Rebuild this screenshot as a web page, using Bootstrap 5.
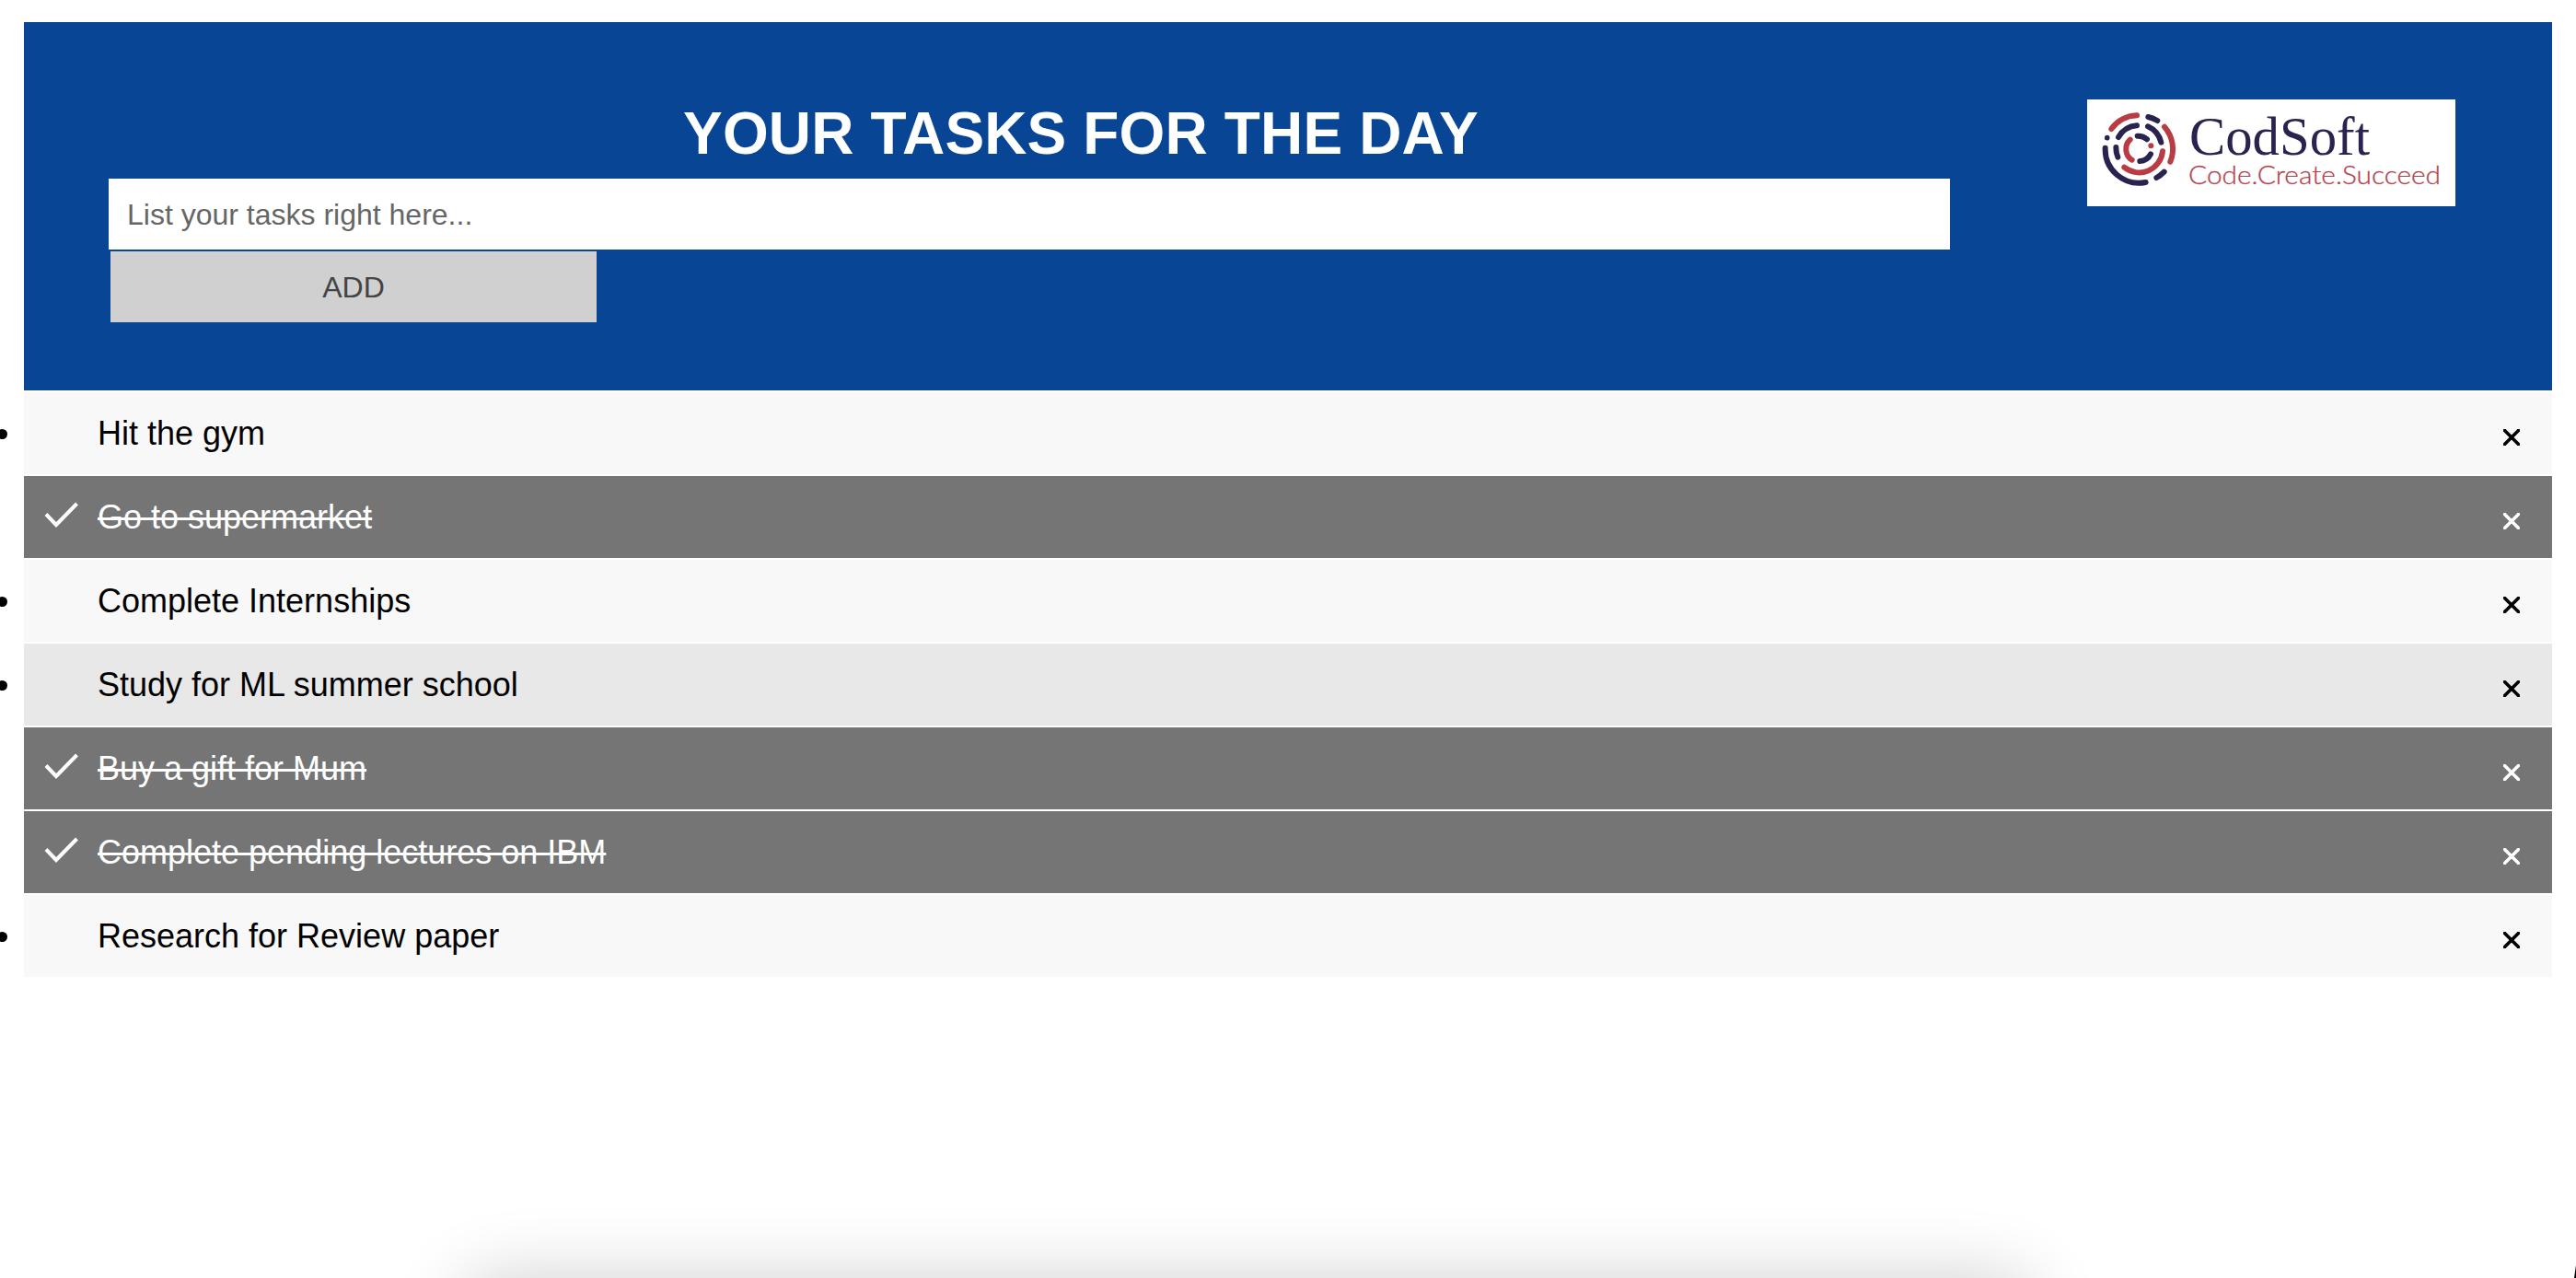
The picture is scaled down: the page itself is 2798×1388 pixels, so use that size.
<!DOCTYPE html>
<html lang="en">
<head>
<meta charset="utf-8">
<title>Your tasks for the day</title>
<link rel="stylesheet" href="https://cdn.jsdelivr.net/npm/bootstrap@5.3.0/dist/css/bootstrap.min.css">
<style>
body{font-family:"Liberation Sans",Arial,sans-serif;color:#000;background:#fff;height:1388px;overflow:hidden}
.todo-app{padding:24px 26px 0}
.todo-head{background:#084594;height:400px;padding:84px 105px 0 80px}
.head-main{width:2136px}
.head-title{font-size:64px;font-weight:700;line-height:74px;height:86px;letter-spacing:.15px}
.task-input{width:2000px;height:77px;margin-left:12px;padding:2px 20px 0;font-size:32px;border:0;border-radius:0;color:#666}
.task-input::placeholder{color:#666;opacity:1}
.add-btn{width:528px;height:77px;margin:2px 0 0 14px;background:#d0d0d0;color:#444;font-size:32px;border:0;border-radius:0}
.brand-logo{width:400px;height:116px}
.task-item{height:89px;margin-top:2px;padding:0 35px 0 22px;background:#f8f8f8;font-size:36px;line-height:54px}
.task-item.is-hover{background:#e8e8e8}
.task-item.done{background:#757575;color:#fff}
.task-item.done .task-text{text-decoration:line-through;text-decoration-thickness:3px}
.task-icon{width:58px;height:89px}
.task-icon svg,.task-x svg{display:block}
.task-x{padding-top:9px}
.bullet{left:-29px;top:40px;width:11px;height:11px;background:#000;border-radius:50%}
.dock-area{left:0;right:0;bottom:0;height:120px;pointer-events:none}
.dock-shadow{left:505px;top:122px;width:1700px;height:200px;border-radius:30px;box-shadow:0 0 80px rgba(0,0,0,.2)}
.corner-edge{right:0;bottom:0;width:2px;height:14px}
</style>
<script src="https://cdn.jsdelivr.net/npm/bootstrap@5.3.0/dist/js/bootstrap.bundle.min.js"></script>
</head>
<body class="position-relative">
<svg class="d-none">
  <symbol id="check" viewBox="0 0 58 89"><path d="M2 41.500L13 53L35.500 30" fill="none" stroke="currentColor" stroke-width="4"/></symbol>
  <symbol id="cross" viewBox="0 0 18 18"><path d="M1.500 1.500L16.500 16.500M16.500 1.500L1.500 16.500" fill="none" stroke="currentColor" stroke-width="3.600" stroke-linecap="round"/></symbol>
</svg>
<main class="todo-app">
  <header class="todo-head d-flex justify-content-between align-items-start">
    <div class="head-main d-flex flex-column align-items-start">
      <h1 class="head-title w-100 text-center text-white mb-0">YOUR TASKS FOR THE DAY</h1>
      <input class="form-control task-input" type="text" placeholder="List your tasks right here...">
      <button class="btn add-btn" type="button">ADD</button>
    </div>
    <svg class="brand-logo flex-shrink-0" viewBox="0 0 400 116">
      <rect width="400" height="116" fill="#fff"/>
      <g transform="translate(3 2) scale(.33333)" fill="none" stroke-linecap="round" stroke-width="18">
        <g stroke="#b93b43">
          <path d="M70 90A110 110 0 0 1 153 46M243 83A110 110 0 0 1 262 197M237 163A77 77 0 0 1 112 215"/>
          <path d="M137 191A42 42 0 0 1 131 125"/>
        </g>
        <g stroke="#292350">
          <path d="M190 51A110 110 0 0 1 220 63M242 230A110 110 0 0 1 217 249M182 264A110 110 0 0 1 50 152"/>
          <path d="M93 117A77 77 0 0 1 153 79M189 82A77 77 0 0 1 232 134M85 150A77 77 0 0 0 91 182"/>
          <path d="M155 113A42 42 0 0 1 186 124M198 172A42 42 0 0 1 163 195"/>
        </g>
        <circle cx="56" cy="119" r="8.500" fill="#292350"/><circle cx="199" cy="145" r="9" fill="#b93b43"/>
      </g>
      <text x="111" y="59.500" font-family="Liberation Serif, serif" font-size="59" fill="#292350" textLength="196" lengthAdjust="spacingAndGlyphs">CodSoft</text>
      <text x="110" y="91.500" font-family="Lato, sans-serif" font-size="27" font-weight="300" fill="#b5444f" stroke="#b5444f" stroke-width=".3" textLength="274" lengthAdjust="spacingAndGlyphs">Code.Create.Succeed</text>
    </svg>
  </header>
  <ul class="list-unstyled mb-0">
    <li class="task-item d-flex align-items-center position-relative"><span class="bullet position-absolute"></span><span class="task-icon"></span><span class="task-text">Hit the gym</span><span class="task-x ms-auto"><svg width="18" height="18"><use href="#cross"/></svg></span></li>
    <li class="task-item done d-flex align-items-center"><span class="task-icon"><svg width="58" height="89"><use href="#check"/></svg></span><span class="task-text">Go to supermarket</span><span class="task-x ms-auto"><svg width="18" height="18"><use href="#cross"/></svg></span></li>
    <li class="task-item d-flex align-items-center position-relative"><span class="bullet position-absolute"></span><span class="task-icon"></span><span class="task-text">Complete Internships</span><span class="task-x ms-auto"><svg width="18" height="18"><use href="#cross"/></svg></span></li>
    <li class="task-item is-hover d-flex align-items-center position-relative"><span class="bullet position-absolute"></span><span class="task-icon"></span><span class="task-text">Study for ML summer school</span><span class="task-x ms-auto"><svg width="18" height="18"><use href="#cross"/></svg></span></li>
    <li class="task-item done d-flex align-items-center"><span class="task-icon"><svg width="58" height="89"><use href="#check"/></svg></span><span class="task-text">Buy a gift for Mum</span><span class="task-x ms-auto"><svg width="18" height="18"><use href="#cross"/></svg></span></li>
    <li class="task-item done d-flex align-items-center"><span class="task-icon"><svg width="58" height="89"><use href="#check"/></svg></span><span class="task-text">Complete pending lectures on IBM</span><span class="task-x ms-auto"><svg width="18" height="18"><use href="#cross"/></svg></span></li>
    <li class="task-item d-flex align-items-center position-relative"><span class="bullet position-absolute"></span><span class="task-icon"></span><span class="task-text">Research for Review paper</span><span class="task-x ms-auto"><svg width="18" height="18"><use href="#cross"/></svg></span></li>
  </ul>
</main>
<div class="dock-area position-absolute overflow-hidden"><div class="dock-shadow position-absolute"></div></div>
<svg class="corner-edge position-absolute" viewBox="0 0 2 14"><path d="M2 0V14H0Z"/></svg>
</body>
</html>
